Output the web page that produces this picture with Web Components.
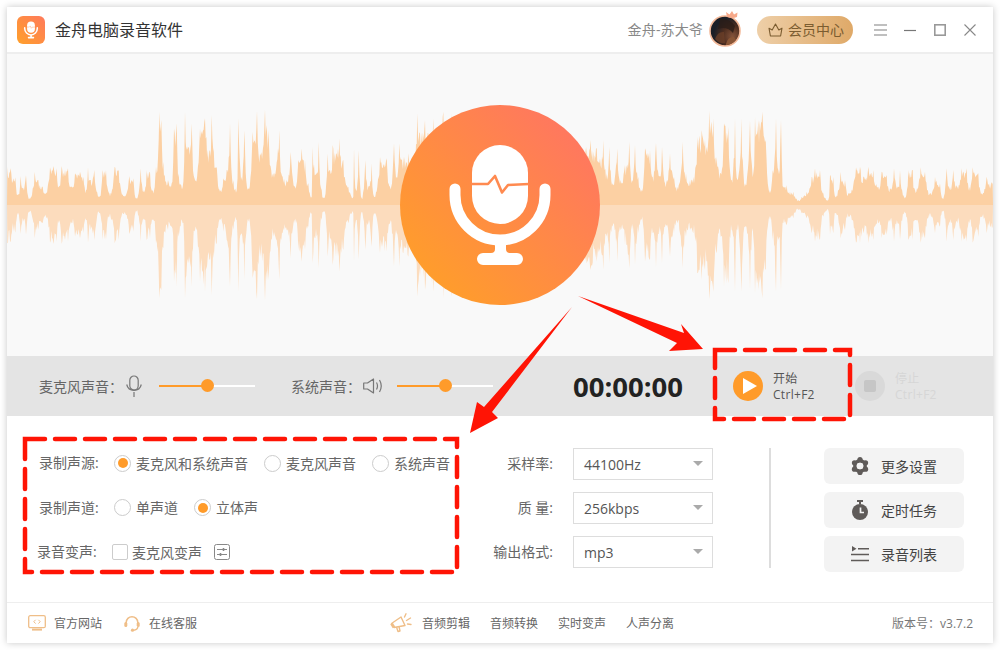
<!DOCTYPE html>
<html lang="zh">
<head>
<meta charset="utf-8">
<title>金舟电脑录音软件</title>
<style>
html,body{margin:0;padding:0;background:#fff}
body{width:1000px;height:650px;overflow:hidden;position:relative;font-family:"Open Sans","Noto Sans CJK SC",sans-serif;font-size:14px;color:#666}
</style>
</head>
<body>
<app-window>
  <title-bar></title-bar>
  <hero-stage></hero-stage>
  <control-bar></control-bar>
  <settings-panel></settings-panel>
  <foot-bar></foot-bar>
</app-window>
<note-overlay></note-overlay>
<script>
function def(name, html){
  customElements.define(name, class extends HTMLElement{
    constructor(){super();this.attachShadow({mode:'open'}).innerHTML=html;}
  });
}
const micGlyph = (pulse)=>`
  <rect x="472" y="145" width="56" height="79" rx="28" fill="#fff"/>
  <path d="M471 184H488L495 176L502 192.5L508 185L529 184" fill="none" stroke="${pulse}" stroke-width="2.6" stroke-linejoin="round"/>
  <path d="M455 189V195A45 45 0 0 0 545 195V189" fill="none" stroke="#fff" stroke-width="11" stroke-linecap="round"/>
  <path d="M495 240H506V249Q506 253 510 253H517A6 6 0 0 1 517 265H483A6 6 0 0 1 483 253H491Q495 253 495 249Z" fill="#fff"/>`;

def('app-window',`<style>
:host{display:flex;flex-direction:column;width:986px;height:636px;margin:7px;background:#fff;box-shadow:0 0 7px rgba(0,0,0,.22)}
</style><slot></slot>`);

def('title-bar',`<style>
:host{display:flex;align-items:center;height:45px;border-bottom:2px solid #eee;padding:0 8px 0 10px;flex:none;box-sizing:content-box}
.logo{width:28px;height:28px;border-radius:6px;background:linear-gradient(45deg,#ffa02a,#ff7a5c);display:block;flex:none}
.title{font-size:16px;color:#333;margin-left:10px;padding-bottom:2px}
.user{margin-left:auto;font-size:14px;color:#888;padding-bottom:2px;letter-spacing:.15px}
.av{margin-left:6px;margin-top:-1px;flex:none;display:block}
.pill{margin-left:16px;width:96px;height:28px;border-radius:14px;background:linear-gradient(90deg,#eecfa8,#dfa968);display:flex;align-items:center;box-sizing:border-box;padding-left:11px;gap:5px;font-size:14px;color:#7b5c30}
.pill span{padding-bottom:2px}
.pill svg{display:block;flex:none}
.btns{display:flex;margin-left:12px}
.btns span{width:30px;height:30px;display:flex;align-items:center;justify-content:center}
</style>
<svg class="logo" viewBox="400 105 200 200">${micGlyph('#ff8a50')}</svg>
<span class="title">金舟电脑录音软件</span>
<span class="user">金舟-苏大爷</span>
<svg class="av" width="32" height="36" viewBox="0 0 32 36">
  <defs>
    <radialGradient id="a" cx=".75" cy=".68" r=".8"><stop offset="0" stop-color="#84533a"/><stop offset=".42" stop-color="#4f2e20"/><stop offset=".8" stop-color="#1b1e26"/></radialGradient>
  </defs>
  <circle cx="16" cy="20" r="15" fill="url(#a)" stroke="#f2b898" stroke-width="1.6"/>
  <path d="M11 8Q21 7 26 15L24 22Q18 15 9 18Z" fill="#2a1d18" opacity=".8"/>
  <path d="M6 28Q9 20 15 21L16 32Q10 33 6 28Z" fill="#6a3f28" opacity=".8"/>
  <path d="M17 33Q19 25 25 26L27 29Q23 34 17 34Z" fill="#8a5636"/>
  <path d="M18 6L17 1L20.5 3.5L23 0L25 3.5L28.5 1.5L28 6Q23 8 18 6Z" fill="#f6a98a"/>
</svg>
<div class="pill">
  <svg width="15" height="14" viewBox="0 0 15 14" fill="none" stroke="#7b5c30" stroke-width="1.1" stroke-linejoin="round"><path d="M1 5.2L4.2 7L7.5 1L10.8 7L14 5.2L12.6 13H2.4Z"/></svg>
  <span>会员中心</span>
</div>
<div class="btns">
  <span><svg width="13" height="12" viewBox="0 0 13 12"><path d="M0 1H13M0 6H13M0 11H13" stroke="#aaa" stroke-width="1.6"/></svg></span>
  <span><svg width="12" height="12" viewBox="0 0 12 12"><path d="M0 6.5H12" stroke="#777" stroke-width="1.2"/></svg></span>
  <span><svg width="12" height="12" viewBox="0 0 12 12"><rect x=".8" y=".8" width="10.4" height="10.4" fill="none" stroke="#999" stroke-width="1.6"/></svg></span>
  <span><svg width="12" height="12" viewBox="0 0 12 12"><path d="M.5 .5L11.5 11.5M11.5 .5L.5 11.5" stroke="#888" stroke-width="1.1"/></svg></span>
</div>`);

/* waveform silhouette read off the reference, in zoom coordinates */
const L=[22,230,32,235,40,265,46,262,54,315,62,258,70,295,78,255,88,325,104,245,115,270,128,290,135,310,150,232,160,228,170,235,176,290,185,228,195,240,204,235,215,290,225,250,240,245,250,260,258,300,264,232,272,270,283,240,298,320,308,240,318,240,328,310,344,230,356,240,372,318,388,258,400,265,410,325,422,235,432,300,440,240,450,245,458,300,468,230,478,65,484,90,490,215,504,270,515,280,522,115,530,100,536,250,548,290,555,65,565,170,575,100,585,270,600,115,615,85,630,180,635,75,650,230,662,300,670,265,680,240,690,100,700,270,710,300,715,85,725,260,733,120,745,295,758,125,771,62,780,190,795,58,805,120,820,250,838,120,848,260,860,270,872,185,885,290,895,210,905,175,915,210,925,280,935,320,938,170,950,250,956,155,965,300,972,325,983,190,990,240,998,165,1008,190,1018,145,1030,210,1045,290,1060,320,1062,175,1068,300,1076,180,1085,325,1096,210,1105,290,1115,220,1122,320,1140,200,1160,205,1170,290,1182,160,1190,260,1198,160];
const C=[70,200,85,190,100,220,112,70,120,130,135,90,145,130,160,85,170,130,190,65,200,130,215,70,225,110,300,200,500,200,620,170,632,150,650,175];
const R=[0,205,10,150,20,250,28,170,38,280,52,175,62,270,75,225,88,155,96,270,105,165,115,260,125,300,135,175,150,180,158,260,168,158,180,260,186,170,195,280,210,190,222,260,232,290,248,155,258,250,270,270,280,260,292,140,305,120,315,150,328,62,340,85,350,200,362,250,372,100,385,110,395,270,405,85,412,270,424,85,435,280,450,90,460,250,465,80,475,90,487,65,497,150,510,300,518,240,528,85,535,240,543,90,550,290,560,285,570,305,580,305,595,330,605,320,620,305,635,260,645,235,660,240,670,310,685,330,690,255,700,260,706,320,722,245,735,270,745,310,768,232,780,230,790,260,805,230,820,240,835,290,845,245,860,255,870,295,882,235,895,290,900,240,915,320,925,240,938,240,945,300,962,232,975,245,990,310,1005,260,1020,280,1028,325,1040,235,1050,290,1060,240,1072,290,1085,235,1100,235,1108,290,1118,232,1135,250,1145,310,1160,260,1170,280,1180,258];
const mid=205;
const pts=[];
for(let i=0;i<L.length;i+=2)pts.push([L[i]/3,mid-(90+L[i+1]/3)]);
for(let i=0;i<C.length;i+=2)pts.push([380+C[i]/3,mid-(90+C[i+1]/3)]);
for(let i=0;i<R.length;i+=2)pts.push([600+R[i]/3,mid-(90+R[i+1]/3)]);
let seed=12345;
const rnd=()=>{seed=(seed*1664525+1013904223)>>>0;return seed/4294967296;};
function buildWave(sign,lo){
  const out=[];
  for(let i=0;i<pts.length-1;i++){
    const [x0,a]=pts[i],[x1,b]=pts[i+1];
    const n=Math.max(1,Math.round((x1-x0)/.7));
    for(let k=0;k<n;k++){
      const t=k/n;
      const h=a>b? b+(a-b)*Math.pow(1-t,2): a+(b-a)*Math.pow(t,2);
      const f=k===0?1:lo+(1-lo)*rnd();
      out.push((x0+t*(x1-x0)).toFixed(1)+' '+(mid-sign*h*f).toFixed(1));
    }
  }
  return 'M7 '+mid+'L'+out.join('L')+'L993 '+mid+'Z';
}
const topD=buildWave(1,.72);
const botD=buildWave(-1,.66);

def('hero-stage',`<style>
:host{display:flex;align-items:center;justify-content:center;height:302px;background:#f9f9f9;position:relative;flex:none}
.wave{position:absolute;left:0;top:0;display:block}
.disc{position:relative;display:block}
</style>
<svg class="wave" width="986" height="302" viewBox="7 54 986 302">
  <defs><filter id="b" x="-1%" y="-5%" width="102%" height="110%"><feGaussianBlur stdDeviation=".3"/></filter></defs>
  <path d="${topD}" fill="#fcd0a3" filter="url(#b)"/>
  <path d="${botD}" fill="#fcdcbd" filter="url(#b)"/>
</svg>
<svg class="disc" width="200" height="200" viewBox="400 105 200 200">
  <defs><linearGradient id="g" x1="0" y1="1" x2="1" y2="0"><stop offset=".12" stop-color="#ff9e2a"/><stop offset=".85" stop-color="#ff785e"/></linearGradient></defs>
  <circle cx="500" cy="205" r="100" fill="url(#g)"/>
  ${micGlyph('#ff8a50')}
</svg>`);

def('vol-slider',`<style>
:host{display:block;width:96px;height:14px;position:relative;flex:none}
.t{position:absolute;left:0;right:0;top:5.5px;height:2px;background:linear-gradient(90deg,#ff9b2a 50%,#fff 50%)}
.k{position:absolute;left:41.5px;top:0;width:13px;height:13px;border-radius:50%;background:#ff9b2a}
</style><div class="t"></div><div class="k"></div>`);

def('rec-button',`<style>
:host{display:flex;align-items:center;gap:10px;flex:none;color:#555;font-size:12px;line-height:16px}
:host([off]){color:#d6d6d6}
.c{width:30px;height:30px;border-radius:50%;background:#ff9b2a;display:flex;align-items:center;justify-content:center}
:host([off]) .c{background:#d9d9d9}
.txt{width:52px;letter-spacing:.3px;padding-top:2px}
svg{display:block}
</style><div class="c"><slot name="icon"></slot></div><div class="txt"><slot></slot></div>`);

def('control-bar',`<style>
:host{display:flex;align-items:center;height:60px;background:#e4e4e4;padding-left:32px;flex:none;color:#666;font-size:14px}
span{white-space:nowrap}
svg{display:block;flex:none}
.time{font-size:27.5px;font-weight:700;color:#222;margin-left:80px;width:110px;line-height:1;padding-top:1px}
.play{margin-left:50px;width:122px}
</style>
<span>麦克风声音：</span>
<svg style="margin-left:3px" width="16" height="22" viewBox="0 0 16 22" fill="none" stroke="#777" stroke-width="1.2"><rect x="3.8" y="1" width="8.4" height="14" rx="4.2"/><path d="M.7 9.5A7.5 7.5 0 0 0 15.3 9.5M8 17V22"/></svg>
<vol-slider style="margin-left:17px"></vol-slider>
<span style="margin-left:36px">系统声音：</span>
<svg style="margin-left:2px" width="20" height="16" viewBox="0 0 20 16" fill="none" stroke="#777" stroke-width="1.2" stroke-linejoin="round"><path d="M.7 5H4.5L10.5 1V15L4.5 11H.7Z"/><path d="M13.5 4.5Q15.5 8 13.5 11.5M16.5 2Q20 8 16.5 14"/></svg>
<vol-slider style="margin-left:14px"></vol-slider>
<span class="time">00:00:00</span>
<rec-button class="play"><svg slot="icon" width="14" height="16" viewBox="0 0 14 16" style="margin-left:3px"><path d="M0 0L14 8L0 16Z" fill="#fff"/></svg>开始<br>Ctrl+F2</rec-button>
<rec-button off class="stop"><svg slot="icon" width="12" height="12" viewBox="0 0 12 12"><rect width="12" height="12" rx="2" fill="#c6c6c6"/></svg>停止<br>Ctrl+F2</rec-button>`);

def('radio-opt',`<style>
:host{display:inline-flex;align-items:center;gap:5px;font-size:14px;color:#666;white-space:nowrap}
.r{width:17px;height:17px;box-sizing:border-box;border:1px solid #ccc;border-radius:50%;background:#fff;display:flex;align-items:center;justify-content:center}
:host([checked]) .r::after{content:"";width:10px;height:10px;border-radius:50%;background:#ff9b2a}
.t{padding-bottom:1px}
</style><span class="r"></span><span class="t"><slot></slot></span>`);

def('check-opt',`<style>
:host{display:inline-flex;align-items:center;gap:4px;font-size:14px;color:#666;white-space:nowrap}
.b{width:16px;height:16px;box-sizing:border-box;border:1px solid #ccc;border-radius:2px;background:#fff}
.t{padding-bottom:1px}
</style><span class="b"></span><span class="t"><slot></slot></span>`);

def('select-box',`<style>
:host{display:flex;align-items:center;box-sizing:border-box;width:140px;height:32px;border:1.3px solid #ddd;background:#fff;padding:0 9px 0 10px;font-size:14px;color:#555}
.v{flex:1}
i{width:0;height:0;border-left:5.5px solid transparent;border-right:5.5px solid transparent;border-top:5.5px solid #aaa;margin-bottom:1px}
</style><span class="v"><slot></slot></span><i></i>`);

def('action-btn',`<style>
:host{display:flex;align-items:center;box-sizing:border-box;width:140px;height:36px;background:#f3f3f3;border-radius:6px;padding-left:26px;font-size:14px;color:#444}
.i{width:20px;height:20px;margin-right:11px;display:flex;align-items:center;justify-content:center}
</style><span class="i"><slot name="icon"></slot></span><slot></slot>`);

def('settings-panel',`<style>
:host{display:flex;height:186px;box-sizing:border-box;padding:32px 0 0 32px;background:#fff;flex:none}
.left{width:435px;display:grid;grid-auto-rows:32px;row-gap:12.5px;align-content:start;margin-top:-1px}
.row{display:flex;align-items:center;color:#666}
.lab{width:75px;flex:none;padding-bottom:2px}
.row radio-opt{margin-right:16px}
.mid{display:grid;grid-template-columns:79px 140px;column-gap:20px;grid-auto-rows:32px;row-gap:12px;align-content:start;align-items:center}
.mid span{text-align:right;color:#666;padding-bottom:2px}
.sep{width:2px;height:120px;background:#ddd;margin-left:56px;flex:none}
.right{margin-left:53px;display:flex;flex-direction:column;gap:8px}
svg{display:block}
</style>
<div class="left">
  <div class="row"><span class="lab">录制声源:</span><radio-opt checked>麦克风和系统声音</radio-opt><radio-opt>麦克风声音</radio-opt><radio-opt>系统声音</radio-opt></div>
  <div class="row"><span class="lab">录制声道:</span><radio-opt>单声道</radio-opt><radio-opt checked>立体声</radio-opt></div>
  <div class="row" style="margin-left:-2px"><span class="lab">录音变声:</span><check-opt>麦克风变声</check-opt>
    <svg style="margin-left:12px" width="16" height="16" viewBox="0 0 16 16" fill="none" stroke="#888" stroke-width="1"><rect x=".5" y=".5" width="15" height="15" rx="2"/><path d="M3 5.5H13M3 10.5H13"/><path d="M9.5 4V7M6.5 9V12" stroke-width="1.6"/></svg>
  </div>
</div>
<div class="mid">
  <span>采样率:</span><select-box>44100Hz</select-box>
  <span>质 量:</span><select-box>256kbps</select-box>
  <span>输出格式:</span><select-box>mp3</select-box>
</div>
<div class="sep"></div>
<div class="right">
  <action-btn><svg slot="icon" width="18" height="18" viewBox="-9 -9 18 18" fill="#5f5b59"><circle r="5.1" fill="none" stroke="#5f5b59" stroke-width="3.6"/><circle cx="0" cy="-6.4" r="2.6"/><circle cx="5.54" cy="-3.2" r="2.6"/><circle cx="5.54" cy="3.2" r="2.6"/><circle cx="0" cy="6.4" r="2.6"/><circle cx="-5.54" cy="3.2" r="2.6"/><circle cx="-5.54" cy="-3.2" r="2.6"/><circle r="3.3" fill="#f3f3f3"/></svg>更多设置</action-btn>
  <action-btn><svg slot="icon" width="16" height="20" viewBox="0 0 16 20"><rect x="5" y="0" width="6" height="2" fill="#5f5b59"/><rect x="7" y="1" width="2" height="3" fill="#5f5b59"/><circle cx="8" cy="12" r="8" fill="#5f5b59"/><path d="M8.5 7.5V12.5H12" fill="none" stroke="#f3f3f3" stroke-width="1.7"/></svg>定时任务</action-btn>
  <action-btn><svg slot="icon" width="18" height="16" viewBox="0 0 18 16"><path d="M1 0L5.5 2.8L1 5.5Z" fill="#5f5b59"/><path d="M7 2.7H18M0 8.5H18M0 14.5H18" stroke="#5f5b59" stroke-width="1.6"/></svg>录音列表</action-btn>
</div>`);

def('foot-item',`<style>
:host{display:flex;align-items:center;font-size:12px;color:#666;white-space:nowrap}
</style><slot name="icon"></slot><slot></slot>`);

def('foot-bar',`<style>
:host{display:flex;align-items:center;height:41px;box-sizing:border-box;border-top:1px solid #eee;padding:0 20px 0 21px;flex:none;font-size:12px;color:#666}
svg{display:block;flex:none}
.ver{margin-left:auto;color:#777}
.tool{margin-left:20px}
</style>
<foot-item><svg slot="icon" style="margin-right:8px" width="18" height="16" viewBox="0 0 18 16" fill="none" stroke="#efbe88" stroke-width="1.3"><rect x=".7" y=".7" width="16.6" height="12" rx="1.5"/><path d="M7.6 4.8L5.8 6.7L7.6 8.6M10.4 4.8L12.2 6.7L10.4 8.6" stroke-width="1"/><path d="M4 14.6H14" stroke-width="2"/></svg>官方网站</foot-item>
<foot-item style="margin-left:22px"><svg slot="icon" style="margin-right:9px" width="16" height="17" viewBox="0 0 16 17" fill="none" stroke="#efbe88" stroke-width="1.5"><path d="M2.2 9V7.5A5.8 5.8 0 0 1 13.8 7.5V9"/><rect x=".3" y="7" width="3" height="5" rx="1.5" fill="#efbe88" stroke="none"/><rect x="12.7" y="7" width="3" height="5" rx="1.5" fill="#efbe88" stroke="none"/><path d="M13.8 12Q13.5 15 9.5 15.2"/><circle cx="8.5" cy="15.2" r="1.6" fill="#efbe88" stroke="none"/></svg>在线客服</foot-item>
<foot-item style="margin-left:193px"><svg slot="icon" style="margin-right:10px" width="22" height="20" viewBox="0 0 22 20" fill="none" stroke="#efbe88" stroke-width="1.4" stroke-linejoin="round"><path d="M1.5 10.5L11 4L15 12.5L4 14.5Z"/><path d="M1.5 10.5L4 14.5" stroke-width="3"/><path d="M6.5 14L8 18.5L10 18L9 13.5"/><path d="M14.5 4L16 .8M16.5 7.5L20.5 5M17.5 11L21 11.5" stroke-linecap="round"/></svg>音频剪辑</foot-item>
<foot-item class="tool">音频转换</foot-item>
<foot-item class="tool">实时变声</foot-item>
<foot-item class="tool">人声分离</foot-item>
<span class="ver">版本号：v3.7.2</span>`);

def('note-overlay',`<style>
:host{position:absolute;left:0;top:0;width:1000px;height:650px;pointer-events:none;display:block}
svg{display:block}
</style>
<svg width="1000" height="650" viewBox="0 0 1000 650">
  <g fill="none" stroke="#ff1405" stroke-width="4.5" stroke-linecap="round" stroke-dasharray="20 10">
    <rect x="25" y="439" width="432" height="133"/>
    <rect x="715" y="350" width="135" height="69"/>
  </g>
  <path d="M578 296L684 333L681 324L703 349L669 351L677 343Z" fill="#ff1405"/>
  <path d="M572 307L492 412L498 418L470 433L477 402L484 407Z" fill="#ff1405"/>
</svg>`);
</script>
</body>
</html>
